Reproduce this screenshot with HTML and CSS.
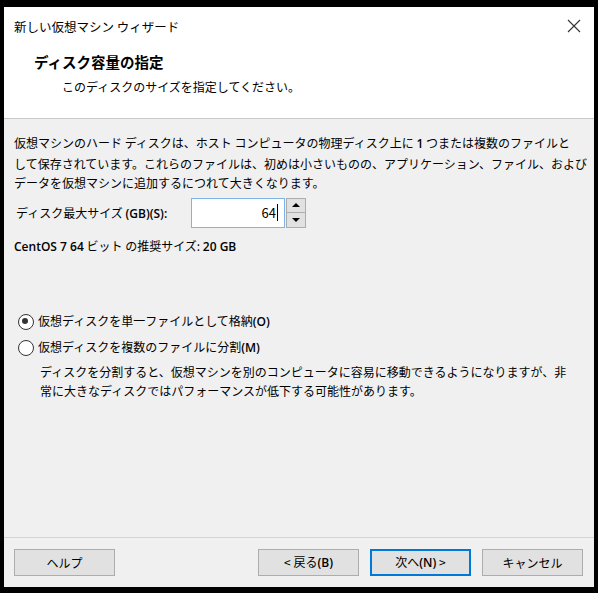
FILE: index.html
```html
<!DOCTYPE html>
<html lang="ja">
<head>
    <meta charset="UTF-8">
    <title>新しい仮想マシン ウィザード</title>
    <link rel="stylesheet" href="styles.css">
</head>
<body>
    <div class="wizard">
        <div class="top">
            <div class="titlebar">
                <span class="title">新しい仮想マシン ウィザード</span>
                <svg class="close" width="14" height="14" viewBox="0 0 14 14">
                    <path d="M1 1 L13 13 M13 1 L1 13" stroke="#333" stroke-width="1.1" fill="none"/>
                </svg>
            </div>
            <h1>ディスク容量の指定</h1>
            <p class="subtitle">このディスクのサイズを指定してください。</p>
        </div>

        <div class="content">
            <p class="intro">仮想マシンのハード ディスクは、ホスト コンピュータの物理ディスク上に <span class="en">1</span> つまたは複数のファイルと<br>して保存されています。これらのファイルは、初めは小さいものの、アプリケーション、ファイル、および<br>データを仮想マシンに追加するにつれて大きくなります。</p>

            <div class="size-row">
                <label for="size">ディスク最大サイズ <span class="en">(GB)(S):</span></label>
                <div class="spinner">
                    <div class="spin-input">
                        <span id="size">64</span><span class="caret"></span>
                    </div>
                    <div class="spin-buttons">
                        <span class="spin-btn"><i class="arrow up"></i></span>
                        <span class="spin-btn"><i class="arrow down"></i></span>
                    </div>
                </div>
            </div>

            <p class="recommend"><span class="en">CentOS 7 64</span> ビット の推奨サイズ: <span class="en">20 GB</span></p>

            <div class="options">
                <div class="radio checked">仮想ディスクを単一ファイルとして格納<span class="en">(O)</span></div>
                <div class="radio">仮想ディスクを複数のファイルに分割<span class="en">(M)</span></div>
                <p class="note">ディスクを分割すると、仮想マシンを別のコンピュータに容易に移動できるようになりますが、非<br>常に大きなディスクではパフォーマンスが低下する可能性があります。</p>
            </div>
        </div>

        <div class="footer">
            <button class="btn">ヘルプ</button>
            <div class="nav">
                <button class="btn">&lt; 戻る<span class="en">(B)</span></button>
                <button class="btn default">次へ<span class="en">(N)</span> &gt;</button>
                <button class="btn">キャンセル</button>
            </div>
        </div>
    </div>
</body>
</html>
```

FILE: styles.css
```css
* {
    margin: 0;
    padding: 0;
    box-sizing: border-box;
}

body {
    background: #000;
    padding: 7px 4px 6px 4px;
    font-family: "Noto Sans CJK JP", "Liberation Sans", sans-serif;
    font-size: 12px;
    color: #000;
}

/* 英数字は少し太めに */
.en {
    font-family: "Open Sans", "Noto Sans CJK JP", sans-serif;
    font-weight: 600;
}

.wizard {
    width: 590px;
    height: 580px;
    background: #f0f0f0;
    display: flex;
    flex-direction: column;
}

/* ヘッダー部分 */
.top {
    background: #fff;
    height: 112px;
    border-bottom: 1px solid #c9c9c9;
}

.titlebar {
    height: 38px;
    display: flex;
    align-items: center;
    justify-content: space-between;
    padding: 0 13px 0 10px;
}

.title {
    font-size: 12.5px;
}

.top h1 {
    font-size: 14.5px;
    font-weight: bold;
    margin: 7px 0 0 30px;
    line-height: 20px;
}

.subtitle {
    margin: 6px 0 0 58px;
    line-height: 18px;
}

/* 本文 */
.content {
    flex: 1;
    padding: 14px 10px 0 10px;
    border-bottom: 1px solid #d4d4d4;
}

.intro {
    line-height: 19.5px;
    white-space: nowrap;
}

.size-row {
    display: flex;
    align-items: center;
    margin-top: 5px;
}

.size-row label {
    width: 177px;
    padding-left: 2px;
}

.spinner {
    display: flex;
    height: 30px;
}

.spin-input {
    width: 94px;
    background: #fff;
    border: 1px solid #7eb4ea;
    display: flex;
    align-items: center;
    justify-content: flex-end;
    padding-right: 6px;
    font-size: 13px;
}

.caret {
    width: 1px;
    height: 17px;
    background: #000;
    margin-left: 1px;
}

.spin-buttons {
    width: 20px;
    margin-left: 1px;
    display: flex;
    flex-direction: column;
}

.spin-btn {
    flex: 1;
    background: #e1e1e1;
    border: 1px solid #adadad;
    display: flex;
    align-items: center;
    justify-content: center;
}

.spin-btn + .spin-btn {
    border-top: none;
}

.arrow {
    width: 0;
    height: 0;
    border-left: 4px solid transparent;
    border-right: 4px solid transparent;
}

.arrow.up {
    border-bottom: 4px solid #000;
}

.arrow.down {
    border-top: 4px solid #000;
}

.recommend {
    margin-top: 8px;
    line-height: 20px;
}

.options {
    margin-top: 54px;
}

.radio {
    position: relative;
    padding-left: 24px;
    line-height: 20px;
    margin-bottom: 5px;
}

.radio::before {
    content: "";
    position: absolute;
    left: 4px;
    top: 3px;
    width: 14px;
    height: 14px;
    border: 1px solid #333;
    border-radius: 50%;
    background: #fff;
}

.radio.checked::after {
    content: "";
    position: absolute;
    left: 8px;
    top: 7px;
    width: 6px;
    height: 6px;
    border-radius: 50%;
    background: #333;
}

.note {
    margin: -1px 0 0 26px;
    line-height: 19.5px;
    white-space: nowrap;
}

/* ボタン */
.footer {
    height: 49px;
    display: flex;
    align-items: center;
    justify-content: space-between;
    padding: 0 11px 1px 10px;
}

.nav {
    display: flex;
    gap: 11px;
}

.btn {
    width: 101px;
    height: 27px;
    background: #e1e1e1;
    border: 1px solid #adadad;
    font-family: inherit;
    font-size: 12px;
    color: #000;
}

.btn.default {
    border: 2px solid #0078d7;
}
```
